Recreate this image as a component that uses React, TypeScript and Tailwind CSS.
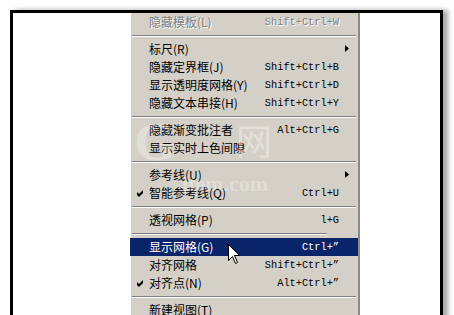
import React from "react";

type Item =
  | { kind: "sep"; short?: boolean }
  | {
      kind: "item";
      label: string;
      shortcut?: string;
      disabled?: boolean;
      checked?: boolean;
      submenu?: boolean;
      active?: boolean;
    };

const items: Item[] = [
  { kind: "item", label: "隐藏模板(L)", shortcut: "Shift+Ctrl+W", disabled: true },
  { kind: "sep" },
  { kind: "item", label: "标尺(R)", submenu: true },
  { kind: "item", label: "隐藏定界框(J)", shortcut: "Shift+Ctrl+B" },
  { kind: "item", label: "显示透明度网格(Y)", shortcut: "Shift+Ctrl+D" },
  { kind: "item", label: "隐藏文本串接(H)", shortcut: "Shift+Ctrl+Y" },
  { kind: "sep" },
  { kind: "item", label: "隐藏渐变批注者", shortcut: "Alt+Ctrl+G" },
  { kind: "item", label: "显示实时上色间隙" },
  { kind: "sep" },
  { kind: "item", label: "参考线(U)", submenu: true },
  { kind: "item", label: "智能参考线(Q)", shortcut: "Ctrl+U", checked: true },
  { kind: "sep" },
  { kind: "item", label: "透视网格(P)", shortcut: "l+G" },
  { kind: "sep", short: true },
  { kind: "item", label: "显示网格(G)", shortcut: "Ctrl+\u201D", active: true },
  { kind: "item", label: "对齐网格", shortcut: "Shift+Ctrl+\u201D" },
  { kind: "item", label: "对齐点(N)", shortcut: "Alt+Ctrl+\u201D", checked: true },
  { kind: "sep" },
  { kind: "item", label: "新建视图(T)" },
];

const cjk = { fontFamily: '"Noto Sans CJK SC", "Noto Sans", sans-serif' };
const mono = { fontFamily: '"Liberation Mono", "DejaVu Sans Mono", monospace' };

function Check({ white }: { white?: boolean }) {
  return (
    <svg width="7" height="7" viewBox="0 0 7 7" className="absolute left-[7px] top-[6px]">
      <polygon points="0,2 2,4 6,0 6,3 2,7 0,5" fill={white ? "#fff" : "#000"} />
    </svg>
  );
}

function Arrow() {
  return (
    <svg width="4" height="7" viewBox="0 0 4 7" className="absolute right-[9px] top-[5px]">
      <polygon points="0,0 4,3.5 0,7" fill="#000" />
    </svg>
  );
}

function Row({ it }: { it: Extract<Item, { kind: "item" }> }) {
  const color = it.active ? "text-white" : it.disabled ? "text-[#808080]" : "text-black";
  const emboss = it.disabled ? "[text-shadow:1px_1px_0_#ffffff]" : "";
  return (
    <div
      className={`relative h-[18px] flex items-center justify-between pl-[19px] pr-[19px] ${
        it.active ? "bg-[#0a246a]" : ""
      }`}
    >
      {it.checked && <Check white={it.active} />}
      <span className={`text-[12px] leading-[18px] ${color} ${emboss}`} style={cjk}>
        {it.label}
      </span>
      {it.shortcut && (
        <span className={`text-[10.3px] leading-[18px] ${color} ${emboss}`} style={mono}>
          {it.shortcut}
        </span>
      )}
      {it.submenu && <Arrow />}
    </div>
  );
}

function Sep({ short }: { short?: boolean }) {
  return (
    <div className="h-[9px] pt-[4px] px-[2px] flex">
      <div
        className={`h-[2px] border-t border-[#808080] border-b border-b-white ${
          short ? "w-[195px]" : "flex-1"
        }`}
      />
    </div>
  );
}

export default function App() {
  return (
    <div className="w-[454px] h-[315px] bg-white overflow-hidden pt-[10px] pl-[10px]">
      <div className="w-[433px] h-[330px] border-l-[3px] border-t-[3px] border-r-[3px] border-black bg-white shadow-[5px_0_5px_rgba(0,0,0,0.35)] pl-[117px]">
        <div className="relative w-[230px] h-[320px] bg-[#d4d0c8] border-r-[2px] border-r-[#8a8a8a] shadow-[inset_1px_0_0_#ffffff]">
          {items.map((it, i) =>
            it.kind === "sep" ? <Sep key={i} short={it.short} /> : <Row key={i} it={it} />
          )}

          {/* watermark overlay */}
          <div className="absolute left-[4px] top-[102px] pointer-events-none flex items-start gap-[60px]">
            <span
              className="text-[54px] font-bold leading-none text-white/30"
              style={{ fontFamily: '"Liberation Serif", serif' }}
            >
              G
            </span>
            <span className="mt-[6px] text-[36px] leading-none text-white/35" style={cjk}>
              网
            </span>
          </div>
          <div
            className="absolute left-[52px] top-[160px] text-[22px] font-bold leading-none text-white/30 pointer-events-none"
            style={{ fontFamily: '"Liberation Serif", serif' }}
          >
            item.com
          </div>

          {/* cursor */}
          <svg width="13" height="22" viewBox="0 0 13 22" className="absolute left-[98px] top-[231px]">
            <polygon
              points="0.5,0.5 0.5,16.5 4.5,12.5 7.5,19.5 9.5,18.5 6.5,11.5 11.5,11.5"
              fill="#fff"
              stroke="#000"
              strokeWidth="1"
            />
          </svg>
        </div>
      </div>
    </div>
  );
}
